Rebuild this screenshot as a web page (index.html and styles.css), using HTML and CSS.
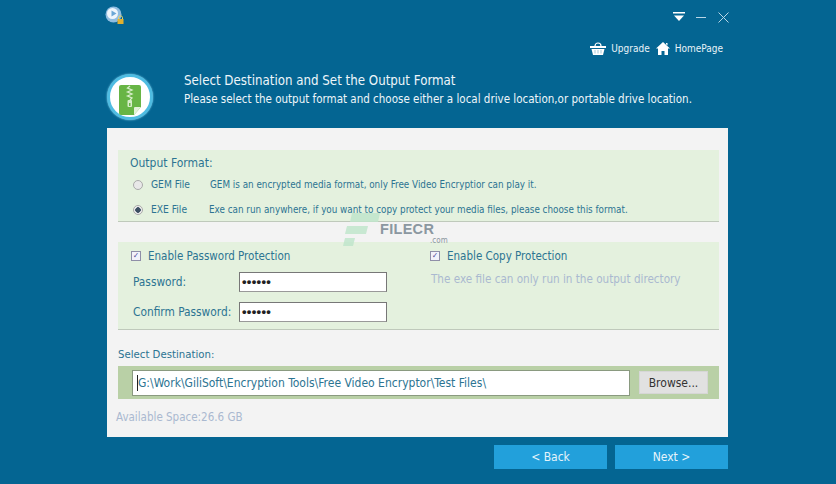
FILE: index.html
```html
<!DOCTYPE html>
<html lang="en">
<head>
  <meta charset="UTF-8" />
  <title>Select Destination</title>
  <link rel="stylesheet" href="styles.css">
</head>
<body>
  <div class="window">
    <div class="titlebar">
      <svg class="app-icon" width="20" height="20" viewBox="0 0 20 20">
        <circle cx="8.5" cy="8.5" r="8" fill="#8fbde0"/>
        <circle cx="7.5" cy="7.5" r="5.5" fill="#eef6fc"/>
        <path d="M6.5 4.5 L11.5 7.5 L6.5 10.5 Z" fill="#6ba8d6"/>
        <path d="M13.5 13 v-1.2 a2 2 0 0 1 4 0 V13" fill="none" stroke="#e9d46a" stroke-width="1"/>
        <rect x="12.5" y="13" width="6" height="5" fill="#e0b030"/>
      </svg>
      <div class="win-btns">
        <svg width="12" height="10" viewBox="0 0 12 10">
          <rect x="0" y="0" width="12" height="1.5" fill="#fff"/>
          <path d="M1 3.5 H11 L6 9 Z" fill="#fff"/>
        </svg>
        <svg width="11" height="10" viewBox="0 0 11 10">
          <rect x="0" y="5" width="10" height="1" fill="#b9d6e6"/>
        </svg>
        <svg width="11" height="11" viewBox="0 0 11 11">
          <path d="M0.5 0.5 L10.5 10.5 M10.5 0.5 L0.5 10.5" stroke="#b9d6e6" stroke-width="1"/>
        </svg>
      </div>
    </div>

    <div class="toplinks">
      <a class="toplink">
        <svg width="16" height="14" viewBox="0 0 16 14">
          <path d="M5 5 A3 3 0 0 1 11 5" fill="none" stroke="#fff" stroke-width="1.2"/>
          <rect x="0" y="5" width="16" height="2" fill="#fff"/>
          <path d="M1.5 8 H14.5 L13 14 H3 Z" fill="#fff"/>
          <path d="M5 9 V12.5 M8 9 V12.5 M11 9 V12.5" stroke="#8dbbd2" stroke-width="0.8"/>
        </svg>
        Upgrade
      </a>
      <a class="toplink">
        <svg width="14" height="13" viewBox="0 0 14 13">
          <path d="M7 0 L14 6.5 H12 V13 H8.5 V9 H5.5 V13 H2 V6.5 H0 Z M10 1 H11.5 V3.5 L10 2.2 Z" fill="#fff"/>
        </svg>
        HomePage
      </a>
    </div>

    <div class="header">
      <div class="logo">
        <svg width="22" height="30" viewBox="0 0 22 30">
          <path d="M2 0 H20 A2 2 0 0 1 22 2 V22 L15 30 H2 A2 2 0 0 1 0 28 V2 A2 2 0 0 1 2 0 Z" fill="#68b545"/>
          <path d="M22 22 H16 A1 1 0 0 0 15 23 V30 Z" fill="#e4f2da"/>
          <path d="M11 1 L8.5 3 L13 5 L8.5 7 L13 9 L8.5 11 L13 13 L11 15" fill="none" stroke="#d8eecb" stroke-width="1.3"/>
          <rect x="8.5" y="15" width="4.5" height="7" rx="1" fill="#d8eecb"/>
          <rect x="10" y="18" width="1.5" height="3" fill="#68b545"/>
        </svg>
      </div>
      <div class="header-text">
        <h1>Select Destination and Set the Output Format</h1>
        <p>Please select the output format and choose either a local drive location,or portable drive location.</p>
      </div>
    </div>

    <div class="panel">
      <section class="group format-group">
        <div class="group-title">Output Format:</div>
        <div class="format-row">
          <span class="radio"></span>
          <span class="format-name">GEM File</span>
          <span class="format-desc">GEM is an encrypted media format, only Free Video Encryptior can play it.</span>
        </div>
        <div class="format-row">
          <span class="radio checked"></span>
          <span class="format-name">EXE File</span>
          <span class="format-desc exe">Exe can run anywhere, if you want to copy protect your media files, please choose this format.</span>
        </div>
      </section>

      <section class="group protect-group">
        <div class="protect-col">
          <div class="check-row"><span class="check">&#10003;</span>Enable Password Protection</div>
          <div class="field-row">
            <label>Password:</label>
            <span class="pw-input">&#8226;&#8226;&#8226;&#8226;&#8226;&#8226;</span>
          </div>
          <div class="field-row">
            <label>Confirm Password:</label>
            <span class="pw-input">&#8226;&#8226;&#8226;&#8226;&#8226;&#8226;</span>
          </div>
        </div>
        <div class="copy-col">
          <div class="check-row"><span class="check">&#10003;</span>Enable Copy Protection</div>
          <p class="hint">The exe file can only run in the output directory</p>
        </div>
      </section>

      <div class="dest-label">Select Destination:</div>
      <div class="dest-bar">
        <div class="dest-input"><span class="caret"></span>G:\Work\GiliSoft\Encryption Tools\Free Video Encryptor\Test Files\</div>
        <button class="browse">Browse...</button>
      </div>
      <div class="space">Available Space:26.6 GB</div>

      <div class="watermark">
        <svg width="38" height="34" viewBox="0 0 38 34">
          <path d="M9 0 H37 L35 9 H7 Z M4 13 H25 L23 21 H2 Z M2 25 H12 L10 33 H0 Z" fill="#bfe5cb" opacity="0.85"/>
        </svg>
        <span class="wm-name">FILECR</span>
        <span class="wm-com">.com</span>
      </div>
    </div>

    <div class="footer">
      <button class="nav-btn">&lt; Back</button>
      <button class="nav-btn">Next &gt;</button>
    </div>
  </div>
</body>
</html>
```

FILE: styles.css
```css
:root {
  --bg: #046592;
  --panel: #f3f3f3;
  --group: #e4f1de;
  --text: #2c7492;
  --blue-btn: #22a0db;
  --ui-font: "DejaVu Sans Condensed", "DejaVu Sans", Tahoma, sans-serif;
}

* {
  box-sizing: border-box;
}

html, body {
  margin: 0;
  height: 100%;
}

body {
  background: var(--bg);
  font-family: var(--ui-font);
  font-stretch: condensed;
  color: var(--text);
  overflow: hidden;
}

.window {
  width: 836px;
  height: 484px;
  padding: 0 108px 0 107px;
}

.titlebar {
  display: flex;
  justify-content: space-between;
  height: 36px;
  padding-top: 6px;
  margin-left: -2px;
}

.win-btns {
  display: flex;
  align-items: flex-start;
  gap: 11px;
  padding-top: 6px;
  margin-right: -1px;
}

.toplinks {
  display: flex;
  justify-content: flex-end;
  gap: 6px;
  height: 36px;
  padding-top: 5px;
  padding-right: 5px;
  font-size: 10px;
  color: #e8f3f8;
}

.toplink {
  display: flex;
  align-items: center;
  gap: 5px;
  height: 14px;
}

.header {
  display: flex;
  align-items: flex-start;
  height: 56px;
}

.logo {
  width: 46px;
  height: 46px;
  margin-top: 2px;
  padding-top: 5px;
  border-radius: 50%;
  background: #fff;
  border: 3px solid #4fbce2;
  box-shadow: 0 0 2px #8fd6ef;
  display: flex;
  align-items: center;
  justify-content: center;
  flex-shrink: 0;
}

.header-text {
  margin-left: 31px;
  color: #eef6fa;
}

.header-text h1 {
  margin: 0;
  font-size: 13.2px;
  font-weight: 400;
  line-height: 17px;
}

.header-text p {
  margin: 2px 0 0;
  font-size: 11.5px;
  font-weight: 400;
  line-height: 16px;
}

.panel {
  position: relative;
  height: 309px;
  background: var(--panel);
  padding: 22px 9px 0 11px;
  font-size: 11px;
}

.group {
  background: var(--group);
  border-bottom: 1px solid #bfc9bb;
}

.format-group {
  height: 72px;
  padding: 5px 12px 0;
}

.group-title {
  font-size: 12px;
  line-height: 17px;
}

.format-row {
  display: flex;
  align-items: center;
  height: 25px;
  padding-left: 3px;
  font-size: 9.8px;
}

.radio {
  width: 10px;
  height: 10px;
  border-radius: 50%;
  background: #e8e8e8;
  border: 1px solid #aaa;
  margin-right: 8px;
}

.radio.checked {
  background: radial-gradient(circle, #3d4f63 0 2.5px, #eee 3px);
}

.format-name {
  width: 59px;
  font-size: 10.2px;
}

.format-desc.exe {
  margin-left: -1px;
}

.protect-group {
  display: flex;
  height: 88px;
  margin-top: 20px;
  padding: 5px 12px 0;
}

.protect-col {
  flex: 0 0 300px;
}

.copy-col {
  flex: 1;
  margin-left: 1px;
}

.check-row {
  display: flex;
  align-items: center;
  height: 18px;
  font-size: 11.5px;
}

.copy-col .check-row {
  margin-left: -2px;
}

.check {
  width: 10px;
  height: 10px;
  margin: 0 7px 0 1px;
  background: #f2f2fa;
  border: 1px solid #8f8fa8;
  color: #3a3f8f;
  font-size: 8px;
  line-height: 8px;
  text-align: center;
}

.field-row {
  display: flex;
  align-items: center;
  height: 22px;
  margin-top: 6px;
  font-size: 11.8px;
  white-space: nowrap;
}

.field-row + .field-row {
  margin-top: 8px;
}

.field-row label {
  width: 109px;
  padding-left: 3px;
  flex-shrink: 0;
}

.pw-input {
  width: 148px;
  height: 20px;
  background: #fff;
  border: 1px solid #777;
  border-bottom-color: #999;
  color: #222;
  font-size: 13px;
  font-weight: 700;
  line-height: 17px;
  padding-left: 2px;
  letter-spacing: 0.3px;
  font-family: "Liberation Sans", sans-serif;
}

.hint {
  margin: 7px 0 0;
  font-size: 11.6px;
  color: #aab9d0;
}

.dest-label {
  margin-top: 17px;
  font-size: 11.3px;
  line-height: 16px;
}

.dest-bar {
  display: flex;
  align-items: center;
  height: 33px;
  margin-top: 3px;
  padding-left: 14px;
  background: #b9d0a6;
}

.dest-input {
  width: 498px;
  height: 26px;
  background: #fff;
  border: 1px solid #8a9a80;
  font-size: 12px;
  line-height: 24px;
  display: flex;
  align-items: center;
  white-space: nowrap;
}

.caret {
  width: 1px;
  height: 16px;
  margin-left: 4px;
  background: #222;
}

.browse {
  width: 69px;
  height: 23px;
  margin-left: 9px;
  padding: 0;
  background: #e1e1e1;
  border: 1px solid #d6d6d6;
  font-family: var(--ui-font);
  font-stretch: condensed;
  font-size: 12px;
  color: #333;
}

.space {
  margin-top: 11px;
  margin-left: -2px;
  font-size: 11.5px;
  color: #aab9d0;
}

.watermark {
  position: absolute;
  left: 236px;
  top: 85px;
  display: flex;
  align-items: flex-start;
  color: #8b97a0;
}

.wm-name {
  font-family: "Liberation Sans", sans-serif;
  font-size: 14.5px;
  font-weight: 700;
  line-height: 13px;
  margin-top: 10px;
  margin-left: -1px;
  letter-spacing: 0.3px;
}

.wm-com {
  position: absolute;
  left: 87px;
  top: 24px;
  font-size: 8px;
  line-height: 8px;
}

.footer {
  display: flex;
  justify-content: flex-end;
  gap: 8px;
  margin-top: 8px;
}

.nav-btn {
  width: 113px;
  height: 24px;
  padding: 0;
  border: 0;
  background: var(--blue-btn);
  color: #e6f4fb;
  font-family: var(--ui-font);
  font-stretch: condensed;
  font-size: 12px;
}
```
